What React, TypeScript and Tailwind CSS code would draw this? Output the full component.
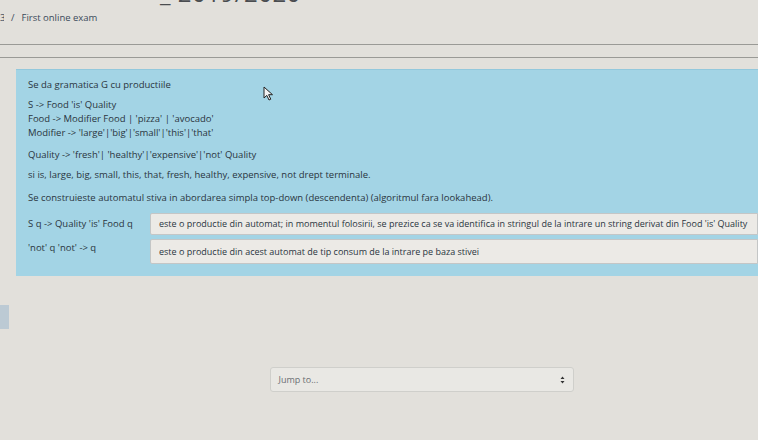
import React from "react";

export default function App() {
  const font = { fontFamily: '"Open Sans", "Noto Sans", sans-serif' };
  return (
    <div
      className="w-[758px] h-[440px] overflow-hidden bg-[#e2e0db] text-[#2a3540] relative"
      style={font}
    >
      {/* cut-off heading */}
      <div className="h-[6px] overflow-hidden relative">
        <div className="absolute left-[160px] top-[-20px] text-[24px] leading-[26px] text-[#4a4d50] tracking-[0.5px]">
          _ 2019/2020
        </div>
      </div>
      {/* breadcrumb */}
      <div className="flex items-center gap-[7px] pl-0 mt-[5px] text-[9.5px] leading-[14px] text-[#3b4a5a]">
        <span className="w-[4px] overflow-hidden">3</span>
        <span>/</span>
        <span>First online exam</span>
      </div>
      {/* rules */}
      <div className="mt-[19px] border-t border-[#9a9a96]" />
      <div className="mt-[12px] border-t border-[#9a9a96]" />
      {/* question box */}
      <div className="mt-[11px] ml-[16px] h-[207px] bg-[#a3d4e5] border-t border-[#93c8dc] pl-[12px] pt-[8px] text-[9.5px] leading-[14px]">
        <div>Se da gramatica G cu productiile</div>
        <div className="mt-[6px]">S -&gt; Food 'is' Quality</div>
        <div>Food -&gt; Modifier Food | 'pizza' | 'avocado'</div>
        <div>Modifier -&gt; 'large'|'big'|'small'|'this'|'that'</div>
        <div className="mt-[8px]">Quality -&gt; 'fresh'| 'healthy'|'expensive'|'not' Quality</div>
        <div className="mt-[6px]">si is, large, big, small, this, that, fresh, healthy, expensive, not drept terminale.</div>
        <div className="mt-[9px]">Se construieste automatul stiva in abordarea simpla top-down (descendenta) (algoritmul fara lookahead).</div>
        <div className="mt-[8px] flex items-center">
          <div className="w-[122px] shrink-0 whitespace-nowrap">S q -&gt; Quality 'is' Food q</div>
          <div className="flex-1 h-[22px] bg-[#eceae6] border border-[#c4c6c6] rounded-l-[2px] pl-[8px] flex items-center whitespace-nowrap overflow-hidden text-[9px]">
            este o productie din automat; in momentul folosirii, se prezice ca se va identifica in stringul de la intrare un string derivat din Food 'is' Quality
          </div>
        </div>
        <div className="mt-[4px] flex items-center">
          <div className="w-[122px] shrink-0 self-start pt-[2px] whitespace-nowrap">'not' q 'not' -&gt; q</div>
          <div className="flex-1 h-[25px] bg-[#eceae6] border border-[#c4c6c6] rounded-l-[2px] pl-[8px] flex items-center whitespace-nowrap overflow-hidden text-[9px]">
            este o productie din acest automat de tip consum de la intrare pe baza stivei
          </div>
        </div>
      </div>
      {/* mouse cursor */}
      <svg className="absolute left-[263px] top-[86px]" width="11" height="15" viewBox="0 0 11 15">
        <path d="M1 1 L1 12 L3.8 9.4 L6 14 L7.8 13.2 L5.6 8.7 L9.5 8.7 Z" fill="#f4f4f4" stroke="#222" strokeWidth="1" />
      </svg>
      {/* sidebar stub */}
      <div className="mt-[29px] w-[9px] h-[24px] bg-[#bccad4]" />
      {/* jump to */}
      <div className="mt-[38px] flex justify-center pl-[85px]">
        <div className="w-[304px] h-[25px] rounded-[3px] border border-[#cfcfcb] bg-[#e9e8e4] flex items-center justify-between pl-[8px] pr-[8px] text-[9px] text-[#6b6f73]">
          <span>Jump to...</span>
          <svg width="5" height="8" viewBox="0 0 5 8">
            <path d="M2.5 0.5 L4.5 3 L0.5 3 Z M2.5 7.5 L4.5 5 L0.5 5 Z" fill="#333" />
          </svg>
        </div>
      </div>
    </div>
  );
}
